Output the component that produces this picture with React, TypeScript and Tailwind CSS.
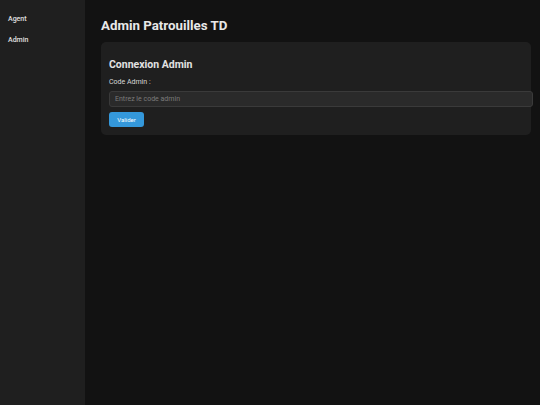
export default function App() {
  return (
    <div className="flex min-h-[405px] w-[540px] bg-[#121212] text-[#e0e0e0]" style={{ fontFamily: 'Roboto, "Liberation Sans", sans-serif' }}>
      {/* Sidebar */}
      <aside className="w-[85px] shrink-0 bg-[#1f1f1f] px-[8px] pt-[14px]">
        <div className="text-[7px] font-medium leading-[10px] text-[#e0e0e0]">Agent</div>
        <div className="mt-[11px] text-[7px] font-medium leading-[10px] text-[#e0e0e0]">Admin</div>
      </aside>

      {/* Main */}
      <main className="min-w-0 flex-1 pl-[16px] pr-[9px] pt-[17px]">
        <h1 className="text-[13.3px] font-bold leading-[18px] text-[#e8e8e8]">Admin Patrouilles TD</h1>
        <section className="mt-[7px] rounded-[5px] bg-[#1f1f1f] px-[8px] pt-[16px] pb-[8px]">
          <h2 className="text-[10.5px] font-bold leading-[14px] text-[#e2e2e2]">Connexion Admin</h2>
          <label className="mt-[5px] block text-[7px] leading-[10px] text-[#d8d8d8]">Code Admin :</label>
          <input
            className="mt-[4px] block h-[16px] w-[424px] rounded-[3px] border border-[#3a3a3a] bg-[#2a2a2a] px-[5px] text-[7px] text-[#ddd] placeholder:text-[#7a7a7a] outline-none"
            placeholder="Entrez le code admin"
          />
          <button className="mt-[5px] block h-[15px] w-[35px] rounded-[3px] bg-[#3498db] text-[6px] text-white">Valider</button>
        </section>
      </main>
    </div>
  );
}
